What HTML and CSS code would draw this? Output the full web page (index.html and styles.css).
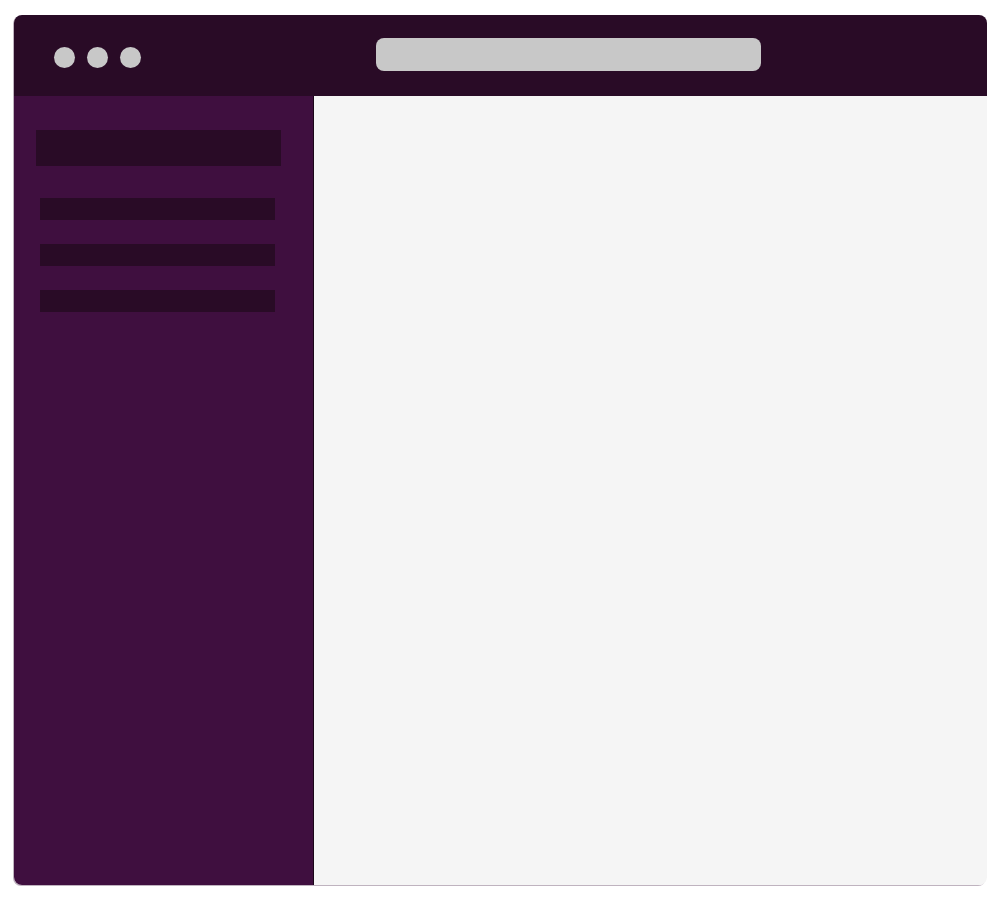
FILE: index.html
```html
<!DOCTYPE html>
<html lang="en">
<head>
  <meta charset="UTF-8" />
  <title>Workspace</title>
  <link rel="stylesheet" href="styles.css">
</head>
<body>
  <div class="window">
    <div class="topbar">
      <div class="dots">
        <span class="dot"></span>
        <span class="dot"></span>
        <span class="dot"></span>
      </div>
      <div class="address"></div>
    </div>
    <div class="body">
      <div class="sidebar">
        <div class="team"></div>
        <div class="channels">
          <div class="channel"></div>
          <div class="channel"></div>
          <div class="channel"></div>
        </div>
      </div>
      <div class="main"></div>
    </div>
  </div>
</body>
</html>
```

FILE: styles.css
```css
html, body {
  margin: 0;
  background: #fff;
}
body {
  padding: 15px 13px 15px 14px;
  font-family: "Liberation Sans", sans-serif;
}
.window {
  height: 870px;
  border-radius: 8px;
  overflow: hidden;
  display: flex;
  flex-direction: column;
  box-shadow: -1px 1px 0 #bfb3bf;
}
.topbar {
  height: 81px;
  box-sizing: border-box;
  background: #290b26;
  display: flex;
  align-items: flex-start;
  padding: 23px 0 0 40px;
}
.dots {
  display: flex;
  gap: 12px;
  margin-top: 9px;
}
.dot {
  width: 21px;
  height: 21px;
  border-radius: 50%;
  background: #c8c8c8;
}
.address {
  width: 385px;
  height: 33px;
  margin-left: 235px;
  border-radius: 8px;
  background: #c8c8c8;
}
.body {
  flex: 1;
  display: flex;
}
.sidebar {
  width: 300px;
  box-sizing: border-box;
  background: #3f0f3f;
  border-right: 1px solid #1a0618;
  padding: 34px 0 0 22px;
}
.team {
  width: 245px;
  height: 36px;
  background: #290b26;
}
.channels {
  display: flex;
  flex-direction: column;
  gap: 24px;
  margin: 32px 0 0 4px;
}
.channel {
  width: 235px;
  height: 22px;
  background: #290b26;
}
.main {
  flex: 1;
  background: #f5f5f5;
}
```
